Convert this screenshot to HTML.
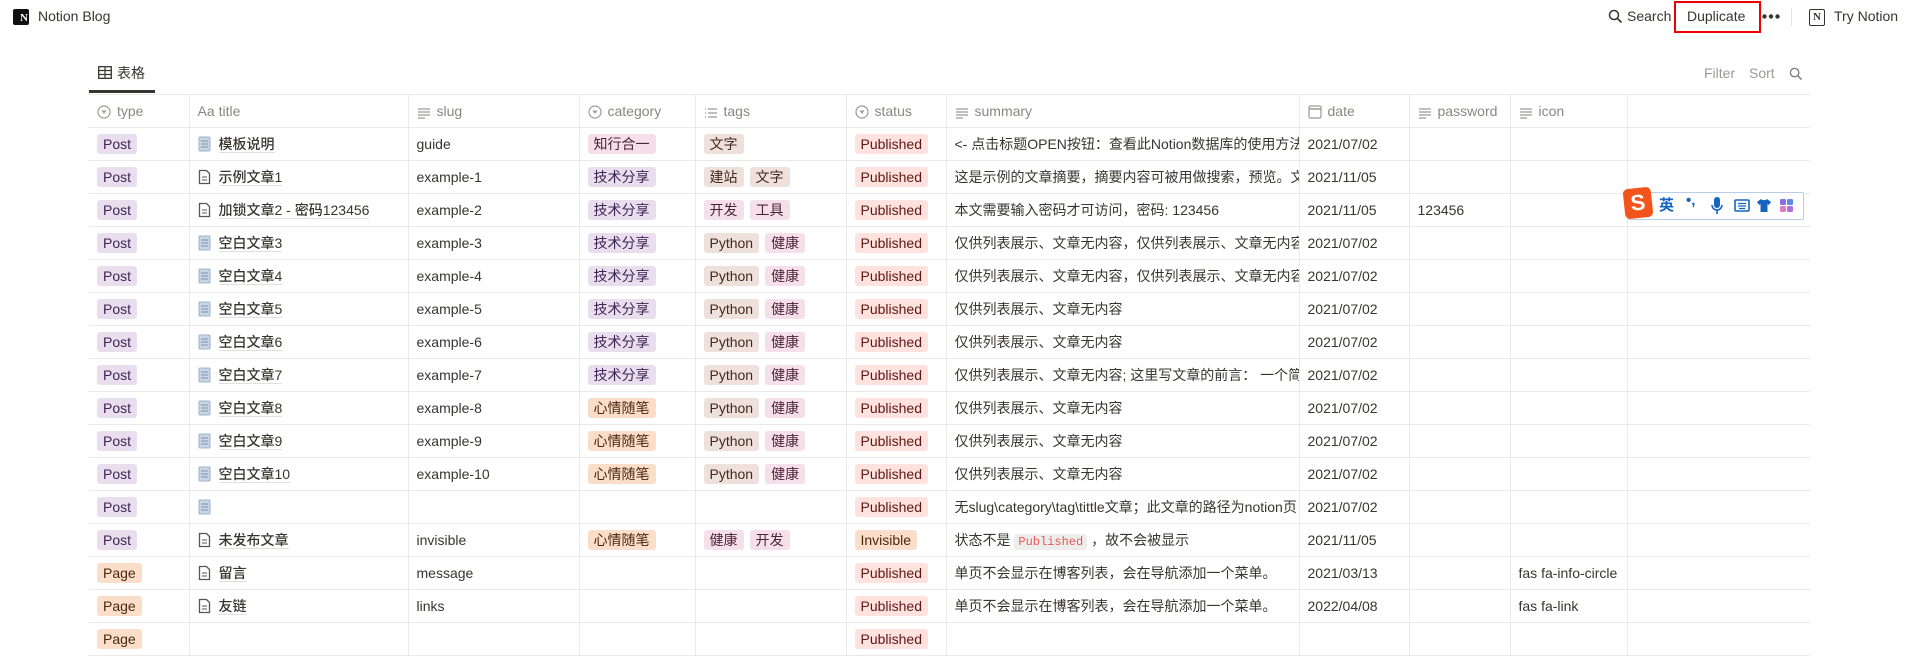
<!DOCTYPE html>
<html><head><meta charset="utf-8">
<style>
*{margin:0;padding:0;box-sizing:border-box}
body{width:1905px;height:632px;overflow:hidden;background:#fff;font-family:"Liberation Sans","Noto Sans CJK SC",sans-serif;color:#37352f;font-size:14px;position:relative}
.top{position:absolute;left:0;top:0;width:1905px;height:34px}
.abs{position:absolute}
table{position:absolute;left:89px;top:94px;border-collapse:collapse;table-layout:fixed;width:1721px}
td,th{height:33px;border-top:1px solid #e9e9e7;border-bottom:1px solid #e9e9e7;border-right:1px solid #e9e9e7;white-space:nowrap;overflow:hidden;padding:0 8px;font-weight:normal;text-align:left;font-size:14px;vertical-align:middle}
td:last-child,th:last-child{border-right:none}
th{color:rgba(55,53,47,.6)}
th svg{vertical-align:-3px;margin-right:6px}
.t{display:inline-block;padding:0 6px;height:20px;line-height:20px;border-radius:3px;margin-right:6px;font-size:14px}
.post{background:#e8deee;color:#412454}
.page{background:#fadec9;color:#49290e}
.pink{background:#f5e0e9;color:#4c2337}
.pur{background:#e8deee;color:#412454}
.ora{background:#fadec9;color:#49290e}
.brn{background:#eee0da;color:#442a1e}
.red{background:#ffe2dd;color:#5d1715}
.ti{font-weight:500;border-bottom:1px solid rgba(55,53,47,.16);}
.ic{display:inline-block;width:13px;height:16px;vertical-align:-3px;margin-right:8px}
code{font-family:"Liberation Mono",monospace;font-size:12px;color:#eb5757;background:rgba(135,131,120,.15);padding:1px 4px;border-radius:3px}
</style></head><body>
<div class="top">
 <div class="abs" style="left:13px;top:9px;width:16px;height:16px;background:#111;border-radius:2px;color:#fff;font:bold 11px 'Liberation Serif';line-height:18px;text-align:right;padding-right:1px">N</div>
 <div class="abs" style="left:38px;top:8px;font-size:14px">Notion Blog</div>
 <svg class="abs" style="left:1608px;top:9px" width="15" height="15" viewBox="0 0 15 15"><circle cx="6" cy="6" r="4.5" fill="none" stroke="#37352f" stroke-width="1.5"/><path d="M9.5 9.5L13.5 13.5" stroke="#37352f" stroke-width="1.6"/></svg>
 <div class="abs" style="left:1627px;top:8px;font-size:14px">Search</div>
 <div class="abs" style="left:1674px;top:1px;width:87px;height:32px;border:2px solid #e00;"></div>
 <div class="abs" style="left:1687px;top:8px;font-size:14px">Duplicate</div>
 <svg class="abs" style="left:1762px;top:14px" width="18" height="5" viewBox="0 0 18 5"><circle cx="2.5" cy="2.5" r="2.2" fill="#37352f"/><circle cx="9" cy="2.5" r="2.2" fill="#37352f"/><circle cx="15.5" cy="2.5" r="2.2" fill="#37352f"/></svg>
 <div class="abs" style="left:1791px;top:8px;width:1px;height:18px;background:#e3e3e1"></div>
 <div class="abs" style="left:1809px;top:9px;width:16px;height:17px;border:1.5px solid #37352f;border-radius:2px;font:bold 11px 'Liberation Serif';text-align:center;line-height:14px">N</div>
 <div class="abs" style="left:1834px;top:8px;font-size:14px">Try Notion</div>
</div>
<svg class="abs" style="left:98px;top:66px" width="14" height="13" viewBox="0 0 14 13"><rect x="0.7" y="0.7" width="12.6" height="11.6" fill="none" stroke="#37352f" stroke-width="1.3"/><path d="M0.7 4.5H13.3M0.7 8.5H13.3M7 0.7V12.3" stroke="#37352f" stroke-width="1.2"/></svg>
<div class="abs" style="left:117px;top:63px;font-size:14px">表格</div>
<div class="abs" style="left:89px;top:90px;width:66px;height:3px;background:#37352f"></div>
<div class="abs" style="left:1704px;top:65px;color:rgba(55,53,47,.5);font-size:14px">Filter</div>
<div class="abs" style="left:1749px;top:65px;color:rgba(55,53,47,.5);font-size:14px">Sort</div>
<svg class="abs" style="left:1789px;top:67px" width="14" height="14" viewBox="0 0 15 15"><circle cx="6" cy="6" r="4.5" fill="none" stroke="#777" stroke-width="1.4"/><path d="M9.5 9.5L13.5 13.5" stroke="#777" stroke-width="1.5"/></svg>

<table>
<colgroup><col style="width:100px"><col style="width:219px"><col style="width:171px"><col style="width:116px"><col style="width:151px"><col style="width:100px"><col style="width:353px"><col style="width:110px"><col style="width:101px"><col style="width:117px"><col style="width:183px"></colgroup>
<tr>
<th><svg width="14" height="14" viewBox="0 0 14 14"><circle cx="7" cy="7" r="6" fill="none" stroke="#9b9a97" stroke-width="1.2"/><path d="M4.5 5.5h5L7 9z" fill="#9b9a97"/></svg>type</th>
<th><span style="margin-right:4px">Aa</span>title</th>
<th><svg width="14" height="12" viewBox="0 0 14 12"><path d="M1 2h12M1 5h12M1 8h12M1 11h7" stroke="#9b9a97" stroke-width="1.2"/></svg>slug</th>
<th><svg width="14" height="14" viewBox="0 0 14 14"><circle cx="7" cy="7" r="6" fill="none" stroke="#9b9a97" stroke-width="1.2"/><path d="M4.5 5.5h5L7 9z" fill="#9b9a97"/></svg>category</th>
<th><svg width="14" height="12" viewBox="0 0 14 12"><path d="M4 2h9M4 6h9M4 10h9M1 2h1M1 6h1M1 10h1" stroke="#9b9a97" stroke-width="1.2"/></svg>tags</th>
<th><svg width="14" height="14" viewBox="0 0 14 14"><circle cx="7" cy="7" r="6" fill="none" stroke="#9b9a97" stroke-width="1.2"/><path d="M4.5 5.5h5L7 9z" fill="#9b9a97"/></svg>status</th>
<th><svg width="14" height="12" viewBox="0 0 14 12"><path d="M1 2h12M1 5h12M1 8h12M1 11h7" stroke="#9b9a97" stroke-width="1.2"/></svg>summary</th>
<th><svg width="14" height="14" viewBox="0 0 14 14"><rect x="1" y="1" width="12" height="12" rx="1.5" fill="none" stroke="#9b9a97" stroke-width="1.2"/><path d="M1 4h12" stroke="#9b9a97" stroke-width="1.5"/></svg>date</th>
<th><svg width="14" height="12" viewBox="0 0 14 12"><path d="M1 2h12M1 5h12M1 8h12M1 11h7" stroke="#9b9a97" stroke-width="1.2"/></svg>password</th>
<th><svg width="14" height="12" viewBox="0 0 14 12"><path d="M1 2h12M1 5h12M1 8h12M1 11h7" stroke="#9b9a97" stroke-width="1.2"/></svg>icon</th>
<th></th>
</tr>
<tr><td><span class="t post">Post</span></td><td><svg class="ic" viewBox="0 0 13 16"><rect x="1" y="1" width="11" height="14" rx="1" fill="#c9d6e6" stroke="#9fb3c8"/><path d="M3 5h7M3 8h7M3 11h7" stroke="#7f93aa"/></svg><span class="ti">模板说明</span></td><td>guide</td><td><span class="t pink">知行合一</span></td><td><span class="t brn">文字</span></td><td><span class="t red">Published</span></td><td>&lt;- 点击标题OPEN按钮：查看此Notion数据库的使用方法</td><td>2021/07/02</td><td></td><td></td><td></td></tr>
<tr><td><span class="t post">Post</span></td><td><svg class="ic" viewBox="0 0 13 16"><path d="M1.5 1.5h7l3 3v10h-10z" fill="none" stroke="#555" stroke-width="1.3"/><path d="M4 8h5M4 11h5" stroke="#555"/></svg><span class="ti">示例文章1</span></td><td>example-1</td><td><span class="t pur">技术分享</span></td><td><span class="t brn">建站</span><span class="t brn">文字</span></td><td><span class="t red">Published</span></td><td>这是示例的文章摘要，摘要内容可被用做搜索，预览。文</td><td>2021/11/05</td><td></td><td></td><td></td></tr>
<tr><td><span class="t post">Post</span></td><td><svg class="ic" viewBox="0 0 13 16"><path d="M1.5 1.5h7l3 3v10h-10z" fill="none" stroke="#555" stroke-width="1.3"/><path d="M4 8h5M4 11h5" stroke="#555"/></svg><span class="ti">加锁文章2 - 密码123456</span></td><td>example-2</td><td><span class="t pur">技术分享</span></td><td><span class="t pink">开发</span><span class="t pink">工具</span></td><td><span class="t red">Published</span></td><td>本文需要输入密码才可访问，密码: 123456</td><td>2021/11/05</td><td>123456</td><td></td><td></td></tr>
<tr><td><span class="t post">Post</span></td><td><svg class="ic" viewBox="0 0 13 16"><rect x="1" y="1" width="11" height="14" rx="1" fill="#c9d6e6" stroke="#9fb3c8"/><path d="M3 5h7M3 8h7M3 11h7" stroke="#7f93aa"/></svg><span class="ti">空白文章3</span></td><td>example-3</td><td><span class="t pur">技术分享</span></td><td><span class="t brn">Python</span><span class="t pink">健康</span></td><td><span class="t red">Published</span></td><td>仅供列表展示、文章无内容，仅供列表展示、文章无内容</td><td>2021/07/02</td><td></td><td></td><td></td></tr>
<tr><td><span class="t post">Post</span></td><td><svg class="ic" viewBox="0 0 13 16"><rect x="1" y="1" width="11" height="14" rx="1" fill="#c9d6e6" stroke="#9fb3c8"/><path d="M3 5h7M3 8h7M3 11h7" stroke="#7f93aa"/></svg><span class="ti">空白文章4</span></td><td>example-4</td><td><span class="t pur">技术分享</span></td><td><span class="t brn">Python</span><span class="t pink">健康</span></td><td><span class="t red">Published</span></td><td>仅供列表展示、文章无内容，仅供列表展示、文章无内容</td><td>2021/07/02</td><td></td><td></td><td></td></tr>
<tr><td><span class="t post">Post</span></td><td><svg class="ic" viewBox="0 0 13 16"><rect x="1" y="1" width="11" height="14" rx="1" fill="#c9d6e6" stroke="#9fb3c8"/><path d="M3 5h7M3 8h7M3 11h7" stroke="#7f93aa"/></svg><span class="ti">空白文章5</span></td><td>example-5</td><td><span class="t pur">技术分享</span></td><td><span class="t brn">Python</span><span class="t pink">健康</span></td><td><span class="t red">Published</span></td><td>仅供列表展示、文章无内容</td><td>2021/07/02</td><td></td><td></td><td></td></tr>
<tr><td><span class="t post">Post</span></td><td><svg class="ic" viewBox="0 0 13 16"><rect x="1" y="1" width="11" height="14" rx="1" fill="#c9d6e6" stroke="#9fb3c8"/><path d="M3 5h7M3 8h7M3 11h7" stroke="#7f93aa"/></svg><span class="ti">空白文章6</span></td><td>example-6</td><td><span class="t pur">技术分享</span></td><td><span class="t brn">Python</span><span class="t pink">健康</span></td><td><span class="t red">Published</span></td><td>仅供列表展示、文章无内容</td><td>2021/07/02</td><td></td><td></td><td></td></tr>
<tr><td><span class="t post">Post</span></td><td><svg class="ic" viewBox="0 0 13 16"><rect x="1" y="1" width="11" height="14" rx="1" fill="#c9d6e6" stroke="#9fb3c8"/><path d="M3 5h7M3 8h7M3 11h7" stroke="#7f93aa"/></svg><span class="ti">空白文章7</span></td><td>example-7</td><td><span class="t pur">技术分享</span></td><td><span class="t brn">Python</span><span class="t pink">健康</span></td><td><span class="t red">Published</span></td><td>仅供列表展示、文章无内容; 这里写文章的前言： 一个简</td><td>2021/07/02</td><td></td><td></td><td></td></tr>
<tr><td><span class="t post">Post</span></td><td><svg class="ic" viewBox="0 0 13 16"><rect x="1" y="1" width="11" height="14" rx="1" fill="#c9d6e6" stroke="#9fb3c8"/><path d="M3 5h7M3 8h7M3 11h7" stroke="#7f93aa"/></svg><span class="ti">空白文章8</span></td><td>example-8</td><td><span class="t ora">心情随笔</span></td><td><span class="t brn">Python</span><span class="t pink">健康</span></td><td><span class="t red">Published</span></td><td>仅供列表展示、文章无内容</td><td>2021/07/02</td><td></td><td></td><td></td></tr>
<tr><td><span class="t post">Post</span></td><td><svg class="ic" viewBox="0 0 13 16"><rect x="1" y="1" width="11" height="14" rx="1" fill="#c9d6e6" stroke="#9fb3c8"/><path d="M3 5h7M3 8h7M3 11h7" stroke="#7f93aa"/></svg><span class="ti">空白文章9</span></td><td>example-9</td><td><span class="t ora">心情随笔</span></td><td><span class="t brn">Python</span><span class="t pink">健康</span></td><td><span class="t red">Published</span></td><td>仅供列表展示、文章无内容</td><td>2021/07/02</td><td></td><td></td><td></td></tr>
<tr><td><span class="t post">Post</span></td><td><svg class="ic" viewBox="0 0 13 16"><rect x="1" y="1" width="11" height="14" rx="1" fill="#c9d6e6" stroke="#9fb3c8"/><path d="M3 5h7M3 8h7M3 11h7" stroke="#7f93aa"/></svg><span class="ti">空白文章10</span></td><td>example-10</td><td><span class="t ora">心情随笔</span></td><td><span class="t brn">Python</span><span class="t pink">健康</span></td><td><span class="t red">Published</span></td><td>仅供列表展示、文章无内容</td><td>2021/07/02</td><td></td><td></td><td></td></tr>
<tr><td><span class="t post">Post</span></td><td><svg class="ic" viewBox="0 0 13 16"><rect x="1" y="1" width="11" height="14" rx="1" fill="#c9d6e6" stroke="#9fb3c8"/><path d="M3 5h7M3 8h7M3 11h7" stroke="#7f93aa"/></svg></td><td></td><td></td><td></td><td><span class="t red">Published</span></td><td>无slug\category\tag\tittle文章；此文章的路径为notion页</td><td>2021/07/02</td><td></td><td></td><td></td></tr>
<tr><td><span class="t post">Post</span></td><td><svg class="ic" viewBox="0 0 13 16"><path d="M1.5 1.5h7l3 3v10h-10z" fill="none" stroke="#555" stroke-width="1.3"/><path d="M4 8h5M4 11h5" stroke="#555"/></svg><span class="ti">未发布文章</span></td><td>invisible</td><td><span class="t ora">心情随笔</span></td><td><span class="t pink">健康</span><span class="t pink">开发</span></td><td><span class="t ora">Invisible</span></td><td>状态不是 <code>Published</code> ，故不会被显示</td><td>2021/11/05</td><td></td><td></td><td></td></tr>
<tr><td><span class="t page">Page</span></td><td><svg class="ic" viewBox="0 0 13 16"><path d="M1.5 1.5h7l3 3v10h-10z" fill="none" stroke="#555" stroke-width="1.3"/><path d="M4 8h5M4 11h5" stroke="#555"/></svg><span class="ti">留言</span></td><td>message</td><td></td><td></td><td><span class="t red">Published</span></td><td>单页不会显示在博客列表，会在导航添加一个菜单。</td><td>2021/03/13</td><td></td><td>fas fa-info-circle</td><td></td></tr>
<tr><td><span class="t page">Page</span></td><td><svg class="ic" viewBox="0 0 13 16"><path d="M1.5 1.5h7l3 3v10h-10z" fill="none" stroke="#555" stroke-width="1.3"/><path d="M4 8h5M4 11h5" stroke="#555"/></svg><span class="ti">友链</span></td><td>links</td><td></td><td></td><td><span class="t red">Published</span></td><td>单页不会显示在博客列表，会在导航添加一个菜单。</td><td>2022/04/08</td><td></td><td>fas fa-link</td><td></td></tr>
<tr><td><span class="t page">Page</span></td><td></td><td></td><td></td><td></td><td><span class="t red">Published</span></td><td></td><td></td><td></td><td></td><td></td></tr>
</table>

<div class="abs" style="left:1628px;top:192px;width:176px;height:28px;background:#fff;border:1px solid #b7cde8;border-radius:2px"></div>
<div class="abs" style="left:1624px;top:188px;width:28px;height:30px;background:#f2541b;border-radius:5px;transform:rotate(-6deg);color:#fff;font:bold 22px 'Liberation Sans';text-align:center;line-height:30px">S</div>
<div class="abs" style="left:1659px;top:194px;color:#1565c0;font-weight:bold;font-size:15px">英</div>
<div class="abs" style="left:1686px;top:192px;color:#1565c0;font-weight:bold;font-size:15px">•,</div>
<svg class="abs" style="left:1711px;top:197px" width="12" height="18" viewBox="0 0 12 18"><rect x="3" y="0" width="6" height="11" rx="3" fill="#1565c0"/><path d="M1 8a5 5 0 0 0 10 0M6 13v4" stroke="#1565c0" stroke-width="1.6" fill="none"/></svg>
<svg class="abs" style="left:1734px;top:199px" width="16" height="13" viewBox="0 0 16 13"><rect x="1" y="1" width="14" height="11" rx="1" fill="none" stroke="#1565c0" stroke-width="1.6"/><path d="M4 4.5h8M4 7h8M5 9.5h6" stroke="#1565c0" stroke-width="1.3"/></svg>
<svg class="abs" style="left:1756px;top:198px" width="16" height="15" viewBox="0 0 16 15"><path d="M5 1L1 4l2 3 1.5-1V14h7V6L13 7l2-3-4-3c-1 1.5-5 1.5-6 0z" fill="#1565c0"/></svg>
<svg class="abs" style="left:1779px;top:198px" width="15" height="15" viewBox="0 0 15 15"><rect x="1" y="1" width="6" height="6" rx="1.5" fill="#8a6de0"/><rect x="8" y="1" width="6" height="6" rx="1.5" fill="#5a8be8"/><rect x="1" y="8" width="6" height="6" rx="1.5" fill="#e07ac0"/><rect x="8" y="8" width="6" height="6" rx="1.5" fill="#b06ee0"/></svg>
</body></html>
